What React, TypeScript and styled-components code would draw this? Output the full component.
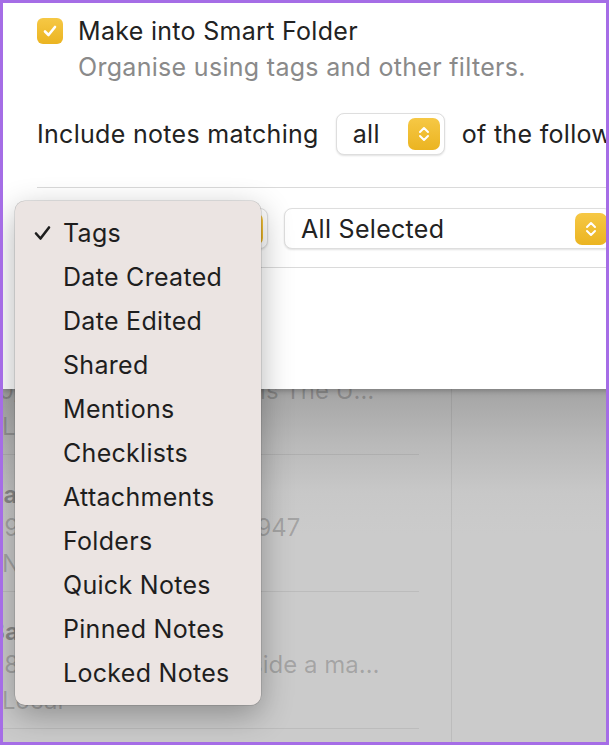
import styled, { createGlobalStyle } from "styled-components";

const GlobalStyle = createGlobalStyle`
  html, body {
    margin: 0;
    padding: 0;
    background: #ffffff;
  }
  body {
    font-family: Inter, "Noto Sans", "Liberation Sans", sans-serif;
    -webkit-font-smoothing: antialiased;
  }
`;

const Frame = styled.div`
  position: relative;
  width: 609px;
  height: 745px;
  box-sizing: border-box;
  border: 3px solid #a56de6;
  overflow: hidden;
`;

// notes window lying under the sheet
const Window = styled.div`
  display: flex;
  height: 100%;
  background: linear-gradient(
    to bottom,
    #cbcbcb 0,
    #cbcbcb 380px,
    #a4a4a4 386px,
    #b9b9b9 440px,
    #c8c8c8 490px,
    #cbcbcb 530px
  );
`;

const NoteList = styled.div`
  width: 449px;
  flex-shrink: 0;
  box-sizing: border-box;
  padding-top: 178px;
  border-right: 1px solid rgba(0, 0, 0, 0.07);
`;

const NoteRow = styled.div`
  height: 137px;
  width: 430px;
  box-sizing: border-box;
  border-bottom: 1px solid rgba(0, 0, 0, 0.07);
  padding-top: 28px;
  margin-left: -14px;
  color: rgba(0, 0, 0, 0.2);
  font-size: 24px;
  white-space: nowrap;
`;

const NoteTitle = styled.div`
  line-height: 24px;
  font-weight: 700;
  color: rgba(0, 0, 0, 0.31);
`;

const NoteMeta = styled.div`
  display: flex;
  gap: 8px;
  line-height: 24px;
  margin-top: 9px;
`;

const Snippet = styled.span<{ $max: number }>`
  max-width: ${(p) => p.$max}px;
  overflow: hidden;
  text-overflow: ellipsis;
`;

const NoteFolder = styled.div`
  display: flex;
  align-items: center;
  gap: 2px;
  line-height: 24px;
  margin-top: 12px;
`;

const DetailPane = styled.div`
  flex: 1;
`;

const Sheet = styled.div`
  position: absolute;
  top: 0;
  left: 0;
  width: 640px;
  height: 386px;
  background: #ffffff;
  box-shadow: 0 2px 6px rgba(0, 0, 0, 0.25);
  box-sizing: border-box;
  padding: 13px 0 0 34px;
  color: #222222;
  font-size: 25px;
  letter-spacing: 0.3px;
  white-space: nowrap;
`;

const CheckRow = styled.div`
  display: flex;
  align-items: center;
  gap: 15px;
  height: 30px;
`;

const CheckBox = styled.div`
  width: 26px;
  height: 26px;
  border-radius: 6px;
  background: linear-gradient(#f6c845, #ebb421);
  display: flex;
  align-items: center;
  justify-content: center;
`;

const Hint = styled.div`
  margin-top: 6px;
  padding-left: 41px;
  line-height: 30px;
  color: #8a8a8a;
`;

const MatchRow = styled.div`
  display: flex;
  align-items: center;
  gap: 17px;
  margin-top: 31px;
  height: 42px;
`;

const Popup = styled.div<{ $w: number; $h: number }>`
  display: flex;
  align-items: center;
  justify-content: space-between;
  box-sizing: border-box;
  width: ${(p) => p.$w}px;
  height: ${(p) => p.$h}px;
  padding: 0 4px 0 16px;
  border-radius: 8px;
  background: #ffffff;
  border: 1px solid #dedede;
  box-shadow: 0 1px 2px rgba(0, 0, 0, 0.12);
  flex-shrink: 0;
`;

const Stepper = styled.div`
  width: 32px;
  height: 32px;
  border-radius: 7px;
  background: linear-gradient(#f6c845, #ebb421);
  display: flex;
  align-items: center;
  justify-content: center;
`;

const Divider = styled.div<{ $top: number }>`
  margin-top: ${(p) => p.$top}px;
  height: 1px;
  background: #dadada;
`;

const RuleRow = styled.div`
  display: flex;
  gap: 16px;
  margin-top: 20px;
`;

const Menu = styled.div`
  position: absolute;
  left: 12px;
  top: 198px;
  width: 246px;
  box-sizing: border-box;
  padding: 10px 0;
  border-radius: 10px;
  background: #ebe4e2;
  box-shadow: 0 0 0 0.5px rgba(0, 0, 0, 0.2), 0 10px 32px rgba(0, 0, 0, 0.3);
  color: #1e1e1e;
  font-size: 25px;
  letter-spacing: 0.3px;
`;

const MenuItem = styled.div`
  position: relative;
  height: 44px;
  line-height: 44px;
  padding-left: 48px;
`;

const Tick = styled.svg`
  position: absolute;
  left: 19px;
  top: 14px;
`;

const Chevrons = () => (
  <svg width="14" height="22" viewBox="0 0 14 22">
    <path
      d="M3 9 L7 5 L11 9 M3 13 L7 17 L11 13"
      fill="none"
      stroke="#ffffff"
      strokeWidth="2"
      strokeLinecap="round"
      strokeLinejoin="round"
    />
  </svg>
);

const FolderIcon = () => (
  <svg width="11" height="11" viewBox="0 0 11 11">
    <path d="M0 2h4l1.5 1.5H11V11H0z" fill="rgba(0,0,0,0.15)" />
  </svg>
);

const notes = [
  { title: "Weekend Trip", date: "12/09/2022", snippet: "Packing list for the hills", max: 250, folder: "Notes" },
  { title: "Travel Plans", date: "10/09/2022", snippet: "Travel details The Ultimate Guide", max: 250, folder: "Local" },
  { title: "Early Morning", date: "09/09/2022", snippet: "Booked ID 947", max: 250, folder: "Notes" },
  { title: "Bazaar List", date: "08/09/2022", snippet: "Put fruit inside a market bag", max: 253, folder: "Local" },
];

const menuItems = [
  "Tags",
  "Date Created",
  "Date Edited",
  "Shared",
  "Mentions",
  "Checklists",
  "Attachments",
  "Folders",
  "Quick Notes",
  "Pinned Notes",
  "Locked Notes",
];

const App = () => {
  return (
    <>
      <GlobalStyle />
      <Frame>
        <Window>
          <NoteList>
            {notes.map((n) => (
              <NoteRow key={n.title}>
                <NoteTitle>{n.title}</NoteTitle>
                <NoteMeta>
                  <span>{n.date}</span>
                  <Snippet $max={n.max}>{n.snippet}</Snippet>
                </NoteMeta>
                <NoteFolder>
                  <FolderIcon />
                  <span>{n.folder}</span>
                </NoteFolder>
              </NoteRow>
            ))}
          </NoteList>
          <DetailPane />
        </Window>

        <Sheet>
          <CheckRow>
            <CheckBox>
              <svg width="16" height="16" viewBox="0 0 16 16">
                <path
                  d="M3 8.5 L6.5 12 L13 4"
                  fill="none"
                  stroke="#ffffff"
                  strokeWidth="2.6"
                  strokeLinecap="round"
                  strokeLinejoin="round"
                />
              </svg>
            </CheckBox>
            <span>Make into Smart Folder</span>
          </CheckRow>
          <Hint>Organise using tags and other filters.</Hint>

          <MatchRow>
            <span>Include notes matching</span>
            <Popup $w={109} $h={42}>
              <span>all</span>
              <Stepper>
                <Chevrons />
              </Stepper>
            </Popup>
            <span>of the following conditions:</span>
          </MatchRow>

          <Divider $top={32} />

          <RuleRow>
            <Popup $w={231} $h={41}>
              <span>Tags</span>
              <Stepper>
                <Chevrons />
              </Stepper>
            </Popup>
            <Popup $w={328} $h={41}>
              <span>All Selected</span>
              <Stepper>
                <Chevrons />
              </Stepper>
            </Popup>
          </RuleRow>

          <Divider $top={18} />
        </Sheet>

        <Menu>
          {menuItems.map((item, i) => (
            <MenuItem key={item}>
              {i === 0 && (
                <Tick width="17" height="16" viewBox="0 0 17 16">
                  <path
                    d="M2 8.5 L6.5 13.5 L15 2.5"
                    fill="none"
                    stroke="#1e1e1e"
                    strokeWidth="2.6"
                    strokeLinecap="round"
                    strokeLinejoin="round"
                  />
                </Tick>
              )}
              {item}
            </MenuItem>
          ))}
        </Menu>
      </Frame>
    </>
  );
};

export default App;
